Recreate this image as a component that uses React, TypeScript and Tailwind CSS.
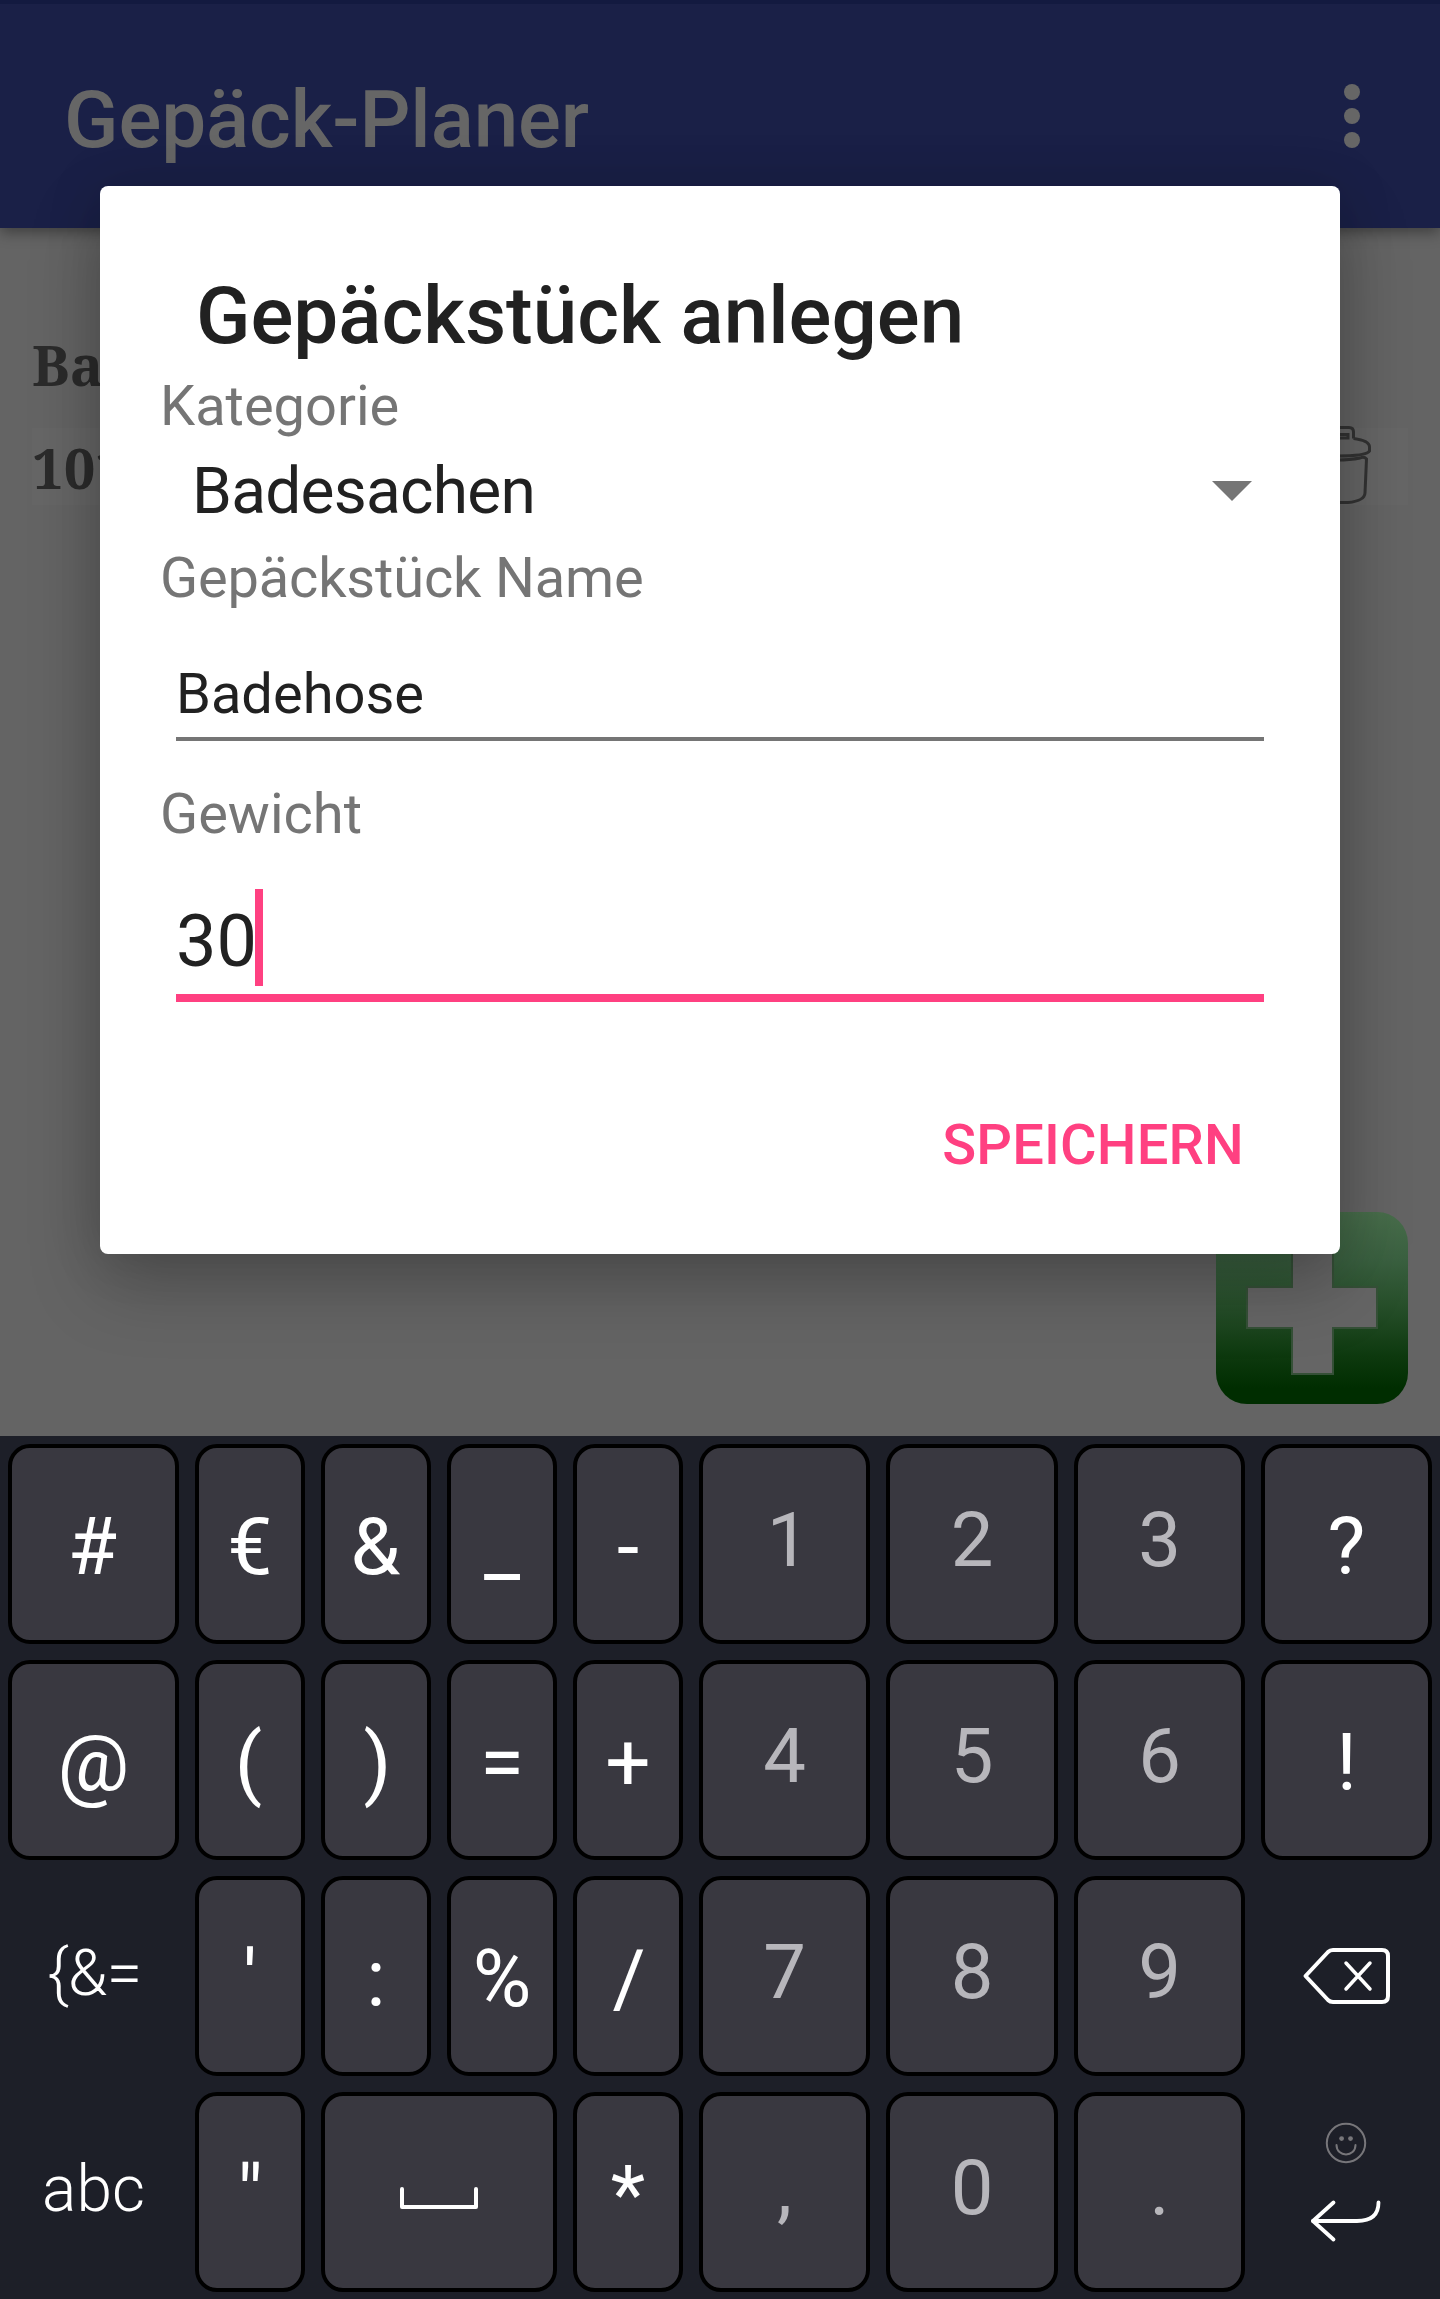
import type { ReactNode } from "react";

type Kind = "symbol" | "digit" | "label" | "icon";

type KeyDef = {
  label: ReactNode;
  kind?: Kind;
  bare?: boolean;
  wide?: boolean;
  nudge?: string;
};

const SpaceIcon = () => (
  <svg className="mt-[12px] h-[24px] w-[80px]" viewBox="0 0 80 24" fill="none" stroke="white" strokeWidth="4" strokeLinecap="round" strokeLinejoin="round">
    <path d="M3 3V21H77V3" />
  </svg>
);

const BackspaceIcon = () => (
  <svg className="h-[60px] w-[92px]" viewBox="0 0 92 60" fill="none" stroke="white" strokeWidth="4" strokeLinecap="round" strokeLinejoin="round">
    <path d="M4.500 30L27 6Q29 4 32 4H81Q87 4 87 10V50Q87 56 81 56H32Q29 56 27 54Z" />
    <path d="M45 17L69 43M69 17L45 43" strokeWidth="3.500" />
  </svg>
);

const EnterIcons = () => (
  <div className="flex flex-col items-center pr-[2px] pb-[20px]">
    <svg className="h-[44px] w-[44px]" viewBox="0 0 44 44" fill="none" stroke="#77767a" strokeWidth="2" strokeLinecap="round">
      <circle cx="22" cy="22" r="19.200" />
      <circle cx="17.600" cy="17.600" r="2.400" fill="#77767a" stroke="none" />
      <circle cx="26.500" cy="17.600" r="2.400" fill="#77767a" stroke="none" />
      <path d="M12.500 24C12.500 36.500 31.500 36.500 31.500 24" />
    </svg>
    <svg className="mt-[34px] h-[44px] w-[72px]" viewBox="0 0 72 44" fill="none" stroke="white" strokeWidth="3.800" strokeLinecap="round" strokeLinejoin="round">
      <path d="M23.500 3.500L3 22L23.500 40.500" />
      <path d="M3 22H47Q68.500 22 68.500 3.500" />
    </svg>
  </div>
);

const keys: KeyDef[] = [
  { label: "#", nudge: "pr-[2px]" }, { label: "€" }, { label: "&", nudge: "pr-[1px]" }, { label: "_" }, { label: "-" },
  { label: "1", kind: "digit", nudge: "pl-[7px]" }, { label: "2", kind: "digit" }, { label: "3", kind: "digit" }, { label: "?" },
  { label: "@" }, { label: "(", nudge: "pr-[3px]" }, { label: ")", nudge: "pl-[3px]" }, { label: "=" }, { label: "+" },
  { label: "4", kind: "digit" }, { label: "5", kind: "digit" }, { label: "6", kind: "digit" }, { label: "!" },
  { label: "{&=", kind: "label", bare: true, nudge: "pl-[2px] tracking-[-0.7px]" }, { label: "'" }, { label: ":" }, { label: "%" }, { label: "/", nudge: "pl-[2px]" },
  { label: "7", kind: "digit" }, { label: "8", kind: "digit" }, { label: "9", kind: "digit" },
  { label: <BackspaceIcon />, kind: "icon", bare: true },
  { label: "abc", kind: "label", bare: true }, { label: '"' }, { label: <SpaceIcon />, kind: "icon", wide: true }, { label: "*" },
  { label: ",", kind: "digit" }, { label: "0", kind: "digit" }, { label: ".", kind: "digit" },
  { label: <EnterIcons />, kind: "icon", bare: true },
];

const kindClass: Record<Kind, string> = {
  symbol: "pt-[5px] text-[80px] text-white",
  digit: "pb-[8px] text-[76px] text-[#b7b6bb]",
  label: "pb-[4px] text-[64px] font-light text-white",
  icon: "",
};

function Key({ label, kind = "symbol", bare, wide, nudge = "" }: KeyDef) {
  return (
    <button
      className={`flex h-[200px] items-center justify-center rounded-[22px] border-4 leading-none ${bare ? "border-transparent" : "border-black bg-[#393840]"} ${wide ? "col-span-2" : ""} ${kindClass[kind]} ${nudge}`}
    >
      {label}
    </button>
  );
}

function Keyboard() {
  return (
    <div className="relative z-20 grid h-[863px] grid-cols-[171px_110px_110px_110px_110px_171px_172px_171px_171px] content-start gap-4 bg-[#1d1f28] p-2">
      {keys.map((key, i) => (
        <Key key={i} {...key} />
      ))}
    </div>
  );
}

function Trash() {
  return (
    <svg className="h-[88px] w-[80px]" viewBox="0 0 80 88" fill="none" stroke="#333333" strokeWidth="3">
      <path d="M22 15.500V8Q22 4.500 26 4.500H53Q57.500 4.500 57.500 9V15.500" />
      <path d="M28 11.500H52V15H28Z" />
      <path d="M57.500 15.500Q73.500 17.500 73.500 24V28Q71 33 41 33Q11 33 8 28V24Q8 17.500 22 15.500" />
      <path d="M11 34L13 66Q13 79.500 28 79.500H52Q68.500 78 69 70L70.500 36Q68 33 64 35Q54 37 41 37Q22 37 11 34" />
    </svg>
  );
}

function AddButton() {
  return (
    <div className="absolute top-[1212px] right-8 h-48 w-48 rounded-[31px] bg-[linear-gradient(180deg,#486d4b_0%,#3a6040_25%,#264e29_50%,#0d390e_75%,#002d00_92%)]">
      <svg className="h-48 w-48" viewBox="0 0 192 192">
        <path d="M76 32H117V75H161V116H117V162H76V116H31V75H76Z" fill="#656565" stroke="#355037" strokeWidth="2" />
      </svg>
    </div>
  );
}

function Dialog() {
  return (
    <div className="absolute top-[186px] left-[100px] z-10 flex h-[1068px] w-[1240px] flex-col rounded-[8px] bg-white px-[60px] text-[56px] leading-[66px] text-[#757575] shadow-[0_32px_72px_rgba(0,0,0,0.22),0_0_56px_rgba(0,0,0,0.14)]">
      <h2 className="mt-[83px] pl-9 text-[80px] leading-[94px] font-medium text-[#212121]">Gepäckstück anlegen</h2>
      <label className="mt-[10px]">Kategorie</label>
      <div className="mt-[15px] flex items-center justify-between pr-7 pl-8 text-[64px] leading-[76px] tracking-[-0.75px] text-[#212121]">
        <span>Badesachen</span>
        <svg className="mb-[2px] h-5 w-10" viewBox="0 0 40 20">
          <path d="M0 0H40L20 20Z" fill="#757575" />
        </svg>
      </div>
      <label className="mt-[15px] tracking-[-0.18px]">Gepäckstück Name</label>
      <div className="mx-4 mt-[50px] h-[80px] border-b-4 border-[#757575] text-[#212121]">Badehose</div>
      <label className="mt-[40px]">Gewicht</label>
      <div className="mx-4 mt-[42px] flex h-[113px] border-b-8 border-[#ff4081] text-[72px] leading-[105px] text-[#212121]">
        <span>30</span>
        <span className="-ml-[2px] h-[97px] w-2 bg-[#ff4081]" />
      </div>
      <button className="mt-[110px] mr-9 self-end font-medium tracking-[0.2px] text-[#ff4081]">SPEICHERN</button>
    </div>
  );
}

export default function App() {
  return (
    <div className="relative w-[1440px] overflow-hidden bg-[#646464] font-['Roboto',sans-serif]">
      <div className="h-[1436px]">
        <header className="relative flex h-[228px] items-center justify-between border-t-4 border-[#131a40] bg-[#1a2047] px-16 shadow-[0_4px_14px_rgba(0,0,0,0.4)]">
          <h1 className="pt-2 text-[80px] leading-[94px] font-medium tracking-[-0.1px] text-[#666666]">Gepäck-Planer</h1>
          <svg className="mr-4 h-16 w-4" viewBox="0 0 16 64" fill="#666666">
            <circle cx="8" cy="8" r="8" />
            <circle cx="8" cy="32" r="8" />
            <circle cx="8" cy="56" r="8" />
          </svg>
        </header>
        <div className="px-8 pt-[96px] font-['Noto_Serif','Liberation_Serif',serif] text-[56px] leading-[80px] font-bold text-[#2b2b2b]">
          <p className="w-[68px] overflow-hidden">Ba</p>
          <div className="mt-[24px] flex h-[77px] items-center justify-between bg-[#666666] pr-8">
            <span className="w-[68px] overflow-hidden">101</span>
            <Trash />
          </div>
        </div>
        <AddButton />
        <Dialog />
      </div>
      <Keyboard />
    </div>
  );
}
